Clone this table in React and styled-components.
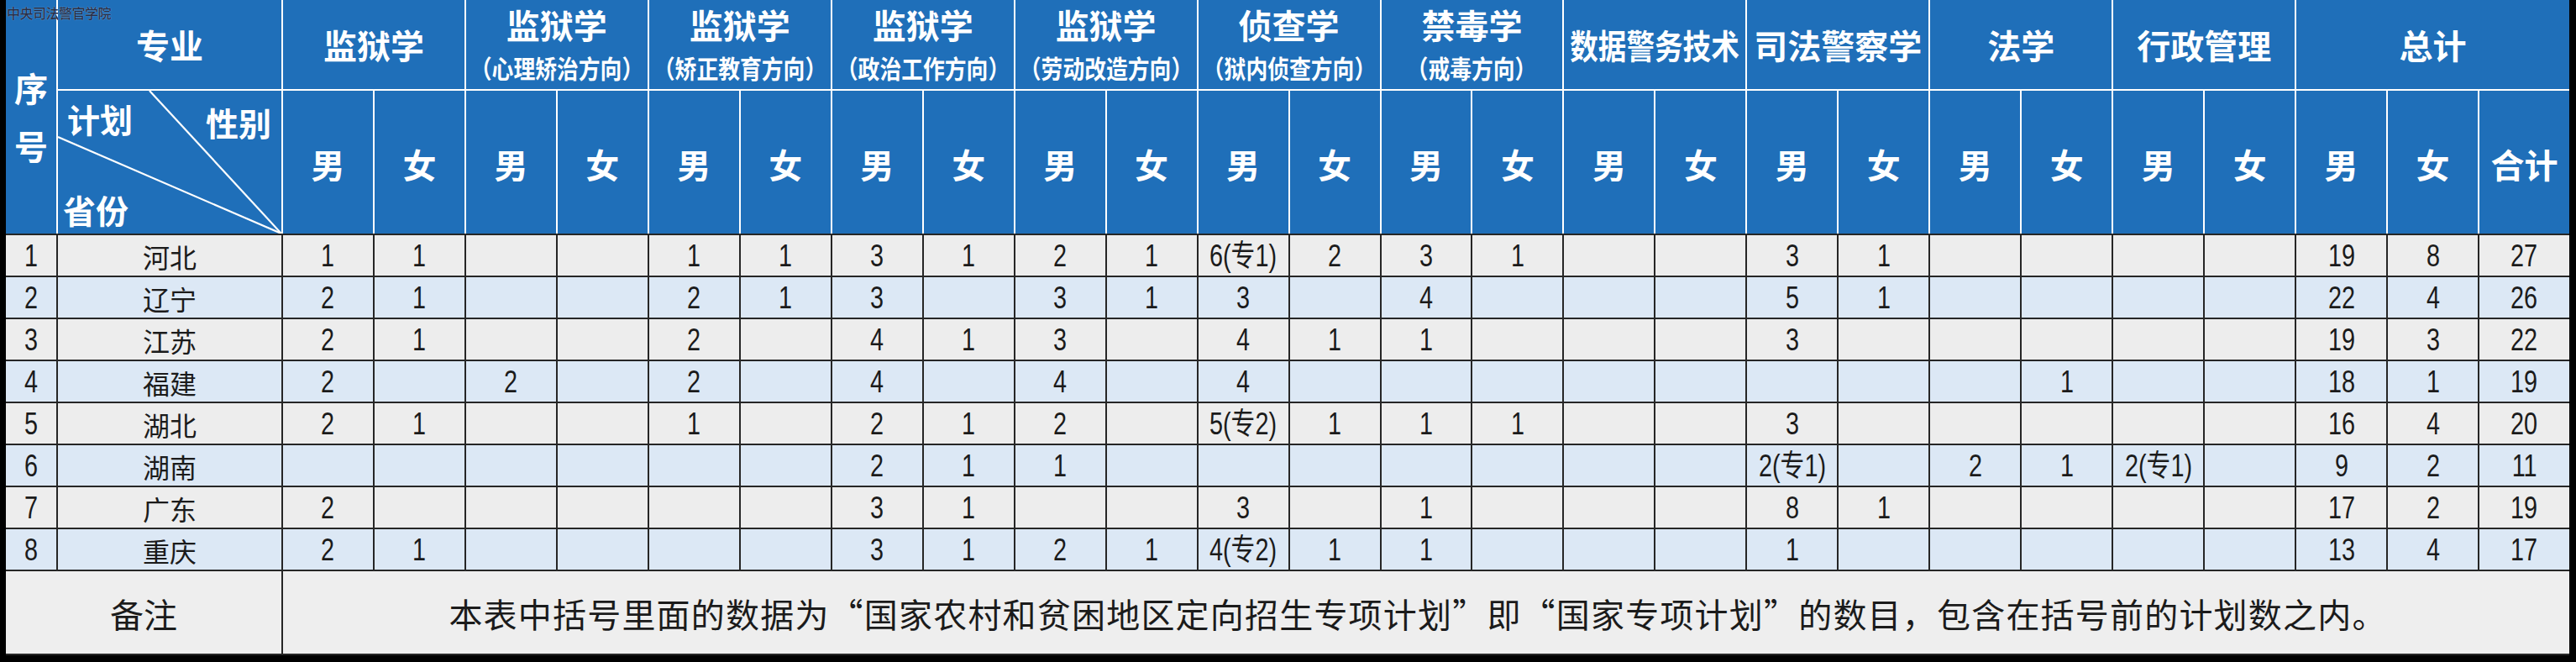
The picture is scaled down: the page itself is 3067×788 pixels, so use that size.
import React from 'react';
import styled, { createGlobalStyle } from 'styled-components';

const Global = createGlobalStyle`
  html, body { margin: 0; padding: 0; background: #000; }
  body { width: 3067px; height: 788px; overflow: hidden; }
  #root { padding: 0 8px 8px 7px; }
`;

const BLUE = '#1f6fb9';
const COLS = '60px 266px repeat(25, 1fr)';

const Sheet = styled.div`
  position: relative;
  width: 3052px;
  display: flex;
  flex-direction: column;
  font-family: 'Noto Sans CJK SC', sans-serif;
`;

const Watermark = styled.div`
  position: absolute;
  left: 1px;
  top: 5px;
  font-size: 16px;
  line-height: 20px;
  font-weight: 500;
  color: rgba(28, 34, 56, 0.92);
  text-shadow: 0 0 1px rgba(200, 215, 235, 0.8);
  letter-spacing: -0.5px;
  z-index: 2;
`;

const Head = styled.div`
  display: grid;
  grid-template-columns: ${COLS};
  grid-template-rows: 106px 170px;
  gap: 2px;
  background: #ffffff;
  height: 278px;
`;

const HeadCell = styled.div`
  background: ${BLUE};
  color: #fff;
  font-weight: 700;
  display: flex;
  flex-direction: column;
  align-items: center;
  justify-content: center;
  grid-column: ${(p) => p.$col || 'auto'};
  grid-row: ${(p) => p.$row || 'auto'};
  overflow: hidden;
  white-space: nowrap;
`;

const SeqLabel = styled.div`
  font-size: 40px;
  line-height: 69px;
  width: 40px;
  text-align: center;
  white-space: normal;
  word-break: break-all;
`;

const Title = styled.div`
  font-size: 40px;
  line-height: ${(p) => (p.$withSub ? '54px' : '48px')};
  transform: ${(p) => (p.$squeeze ? 'scaleX(0.84)' : 'none')};
`;

const Sub = styled.div`
  font-size: 30px;
  line-height: 48px;
  transform: scaleX(0.86);
`;

const Gender = styled.div`
  font-size: 40px;
  line-height: 48px;
  padding-top: 4px;
`;

const DiagCell = styled.div`
  position: relative;
  background: ${BLUE};
  color: #fff;
  font-weight: 700;
  grid-column: 2;
  grid-row: 2;
`;

const DiagLines = styled.svg`
  position: absolute;
  inset: 0;
  width: 100%;
  height: 100%;
`;

const DiagLabels = styled.div`
  position: relative;
  height: 100%;
  box-sizing: border-box;
  display: grid;
  grid-template-columns: 1fr auto;
  grid-template-rows: auto 1fr auto;
  padding: 12px 12px 8px 6px;
  font-size: 39px;
  line-height: 42px;
`;

const DiagLabel = styled.div`
  grid-column: ${(p) => p.$col};
  grid-row: ${(p) => p.$row};
  padding-left: ${(p) => p.$indent || 0}px;
  padding-top: ${(p) => p.$drop || 0}px;
`;

const Body = styled.div`
  display: grid;
  grid-template-columns: ${COLS};
  grid-template-rows: repeat(8, 48px) 98px;
  gap: 2px;
  padding: 2px 0;
  background: #262626;
`;

const Cell = styled.div`
  background: ${(p) => (p.$alt ? '#dce8f5' : '#ededed')};
  color: #1b1b1b;
  display: flex;
  align-items: center;
  justify-content: center;
  white-space: nowrap;
  padding-top: 2px;
`;

const Value = styled.span`
  display: inline-block;
  font-family: 'Liberation Sans', 'Noto Sans CJK SC', sans-serif;
  font-size: 36px;
  line-height: 1;
  transform: scaleX(0.8);
`;

const Province = styled(Cell)`
  font-family: 'Noto Sans CJK SC', sans-serif;
  font-size: 32px;
  line-height: 1;
`;

const RemarkLabel = styled(Cell)`
  grid-column: 1 / span 2;
  font-family: 'Noto Sans CJK SC', sans-serif;
  font-size: 40px;
  background: #eeeeee;
`;

const RemarkText = styled(Cell)`
  grid-column: 3 / span 25;
  font-family: 'Noto Sans CJK SC', sans-serif;
  font-size: 40px;
  letter-spacing: 1.2px;
  background: #eeeeee;
  padding-right: 20px;
`;

const groups = [
  { title: '监狱学' },
  { title: '监狱学', sub: '（心理矫治方向）' },
  { title: '监狱学', sub: '（矫正教育方向）' },
  { title: '监狱学', sub: '（政治工作方向）' },
  { title: '监狱学', sub: '（劳动改造方向）' },
  { title: '侦查学', sub: '（狱内侦查方向）' },
  { title: '禁毒学', sub: '（戒毒方向）' },
  { title: '数据警务技术', squeeze: true },
  { title: '司法警察学' },
  { title: '法学' },
  { title: '行政管理' },
];

const rows = [
  ['河北', ['1', '1', '', '', '1', '1', '3', '1', '2', '1', '6(专1)', '2', '3', '1', '', '', '3', '1', '', '', '', '', '19', '8', '27']],
  ['辽宁', ['2', '1', '', '', '2', '1', '3', '', '3', '1', '3', '', '4', '', '', '', '5', '1', '', '', '', '', '22', '4', '26']],
  ['江苏', ['2', '1', '', '', '2', '', '4', '1', '3', '', '4', '1', '1', '', '', '', '3', '', '', '', '', '', '19', '3', '22']],
  ['福建', ['2', '', '2', '', '2', '', '4', '', '4', '', '4', '', '', '', '', '', '', '', '', '1', '', '', '18', '1', '19']],
  ['湖北', ['2', '1', '', '', '1', '', '2', '1', '2', '', '5(专2)', '1', '1', '1', '', '', '3', '', '', '', '', '', '16', '4', '20']],
  ['湖南', ['', '', '', '', '', '', '2', '1', '1', '', '', '', '', '', '', '', '2(专1)', '', '2', '1', '2(专1)', '', '9', '2', '11']],
  ['广东', ['2', '', '', '', '', '', '3', '1', '', '', '3', '', '1', '', '', '', '8', '1', '', '', '', '', '17', '2', '19']],
  ['重庆', ['2', '1', '', '', '', '', '3', '1', '2', '1', '4(专2)', '1', '1', '', '', '', '1', '', '', '', '', '', '13', '4', '17']],
];

const genders = [];
groups.forEach(() => {
  genders.push('男', '女');
});
genders.push('男', '女', '合计');

export default function App() {
  return (
    <>
      <Global />
      <Sheet>
        <Watermark>中央司法警官学院</Watermark>
        <Head>
          <HeadCell $col="1" $row="1 / span 2">
            <SeqLabel>序号</SeqLabel>
          </HeadCell>
          <HeadCell $col="2" $row="1">
            <Title>专业</Title>
          </HeadCell>
          {groups.map((g, i) => (
            <HeadCell key={i} $col={`${3 + i * 2} / span 2`} $row="1">
              <Title $withSub={!!g.sub} $squeeze={g.squeeze}>{g.title}</Title>
              {g.sub && <Sub>{g.sub}</Sub>}
            </HeadCell>
          ))}
          <HeadCell $col="25 / span 3" $row="1">
            <Title>总计</Title>
          </HeadCell>
          <DiagCell>
            <DiagLines viewBox="0 0 266 170" preserveAspectRatio="none">
              <line x1="109" y1="0" x2="266" y2="170" stroke="#fff" strokeWidth="2.2" />
              <line x1="0" y1="55" x2="266" y2="170" stroke="#fff" strokeWidth="2.2" />
            </DiagLines>
            <DiagLabels>
              <DiagLabel $col={1} $row={1} $indent={5}>计划</DiagLabel>
              <DiagLabel $col={2} $row={1} $drop={4}>性别</DiagLabel>
              <DiagLabel $col={1} $row={3}>省份</DiagLabel>
            </DiagLabels>
          </DiagCell>
          {genders.map((t, i) => (
            <HeadCell key={`g${i}`} $col={`${3 + i}`} $row="2">
              <Gender>{t}</Gender>
            </HeadCell>
          ))}
        </Head>
        <Body>
          {rows.map(([name, vals], r) => (
            <React.Fragment key={name}>
              <Cell $alt={r % 2 === 1}>
                <Value>{r + 1}</Value>
              </Cell>
              <Province $alt={r % 2 === 1}>{name}</Province>
              {vals.map((v, c) => (
                <Cell key={c} $alt={r % 2 === 1}>
                  {v && <Value>{v}</Value>}
                </Cell>
              ))}
            </React.Fragment>
          ))}
          <RemarkLabel>备注</RemarkLabel>
          <RemarkText>
            本表中括号里面的数据为“国家农村和贫困地区定向招生专项计划”即“国家专项计划”的数目，包含在括号前的计划数之内。
          </RemarkText>
        </Body>
      </Sheet>
    </>
  );
}
